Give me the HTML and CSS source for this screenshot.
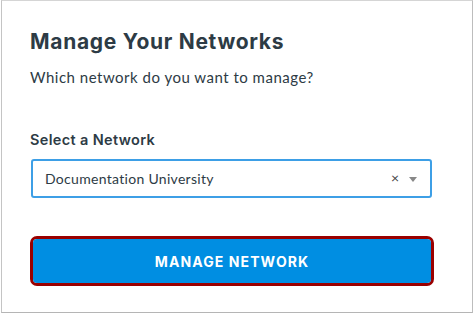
FILE: index.html
```html
<!DOCTYPE html>
<html>
<head>
<meta charset="utf-8">
<link rel="stylesheet" href="styles.css">
</head>
<body>
<div class="frame">
  <div class="panel">
    <h1 class="title">Manage Your Networks</h1>
    <p class="subtitle">Which network do you want to manage?</p>
    <label class="label">Select a Network</label>
    <div class="select">
      <span class="select-value">Documentation University</span>
      <span class="select-clear">×</span>
      <span class="select-arrow"></span>
    </div>
    <div class="btn-ring">
      <button class="btn">MANAGE NETWORK</button>
    </div>
  </div>
</div>
</body>
</html>
```
FILE: styles.css
```css
html, body {
  margin: 0;
  padding: 0;
  background: #ffffff;
}
body {
  font-family: Lato, "Open Sans", sans-serif;
  color: #2d3b45;
}
.frame {
  box-sizing: border-box;
  width: 472px;
  height: 313px;
  margin-left: 1px;
  border: 1px solid #d5d5d5;
  border-left-color: #c4c4c4;
  border-right-color: #bdbdbd;
  border-bottom-color: #b5b5b5;
  box-shadow: 1px 1px 1px rgba(0,0,0,0.15);
  background: #fff;
}
.panel {
  display: flex;
  flex-direction: column;
  padding: 29px 0 0 28px;
}
.title {
  margin: 0;
  font-family: Inter, Lato, sans-serif;
  font-size: 21px;
  font-weight: 700;
  line-height: 24px;
  letter-spacing: 0.7px;
}
.subtitle {
  margin: 13px 0 0 0;
  font-size: 15px;
  line-height: 20px;
  letter-spacing: 0.5px;
}
.label {
  margin-top: 44px;
  font-family: Inter, Lato, sans-serif;
  font-size: 14.5px;
  font-weight: 600;
  line-height: 18px;
  letter-spacing: 0.35px;
}
.select {
  box-sizing: border-box;
  margin-top: 10px;
  margin-left: 1px;
  width: 401px;
  height: 39px;
  border: 2px solid #3d9fe6;
  border-radius: 3px;
  display: flex;
  align-items: center;
  padding: 0 13px 0 12px;
  font-size: 14px;
}
.select-value {
  flex: 1;
  letter-spacing: 0.3px;
}
.select-clear {
  font-size: 14px;
  color: #444;
  margin-right: 10px;
  margin-top: -2px;
}
.select-arrow {
  width: 0;
  height: 0;
  border-left: 4.5px solid transparent;
  border-right: 4.5px solid transparent;
  border-top: 5px solid #888;
  margin-top: 2px;
}
.btn-ring {
  box-sizing: border-box;
  margin-top: 38px;
  width: 404px;
  height: 50px;
  border: 3px solid #9a0000;
  border-radius: 7px;
  display: flex;
}
.btn {
  flex: 1;
  border: none;
  border-radius: 4px;
  background: #008ee2;
  color: #fff;
  font-family: Inter, Lato, sans-serif;
  font-size: 14px;
  font-weight: 700;
  letter-spacing: 1.1px;
  padding: 0;
  margin: 0;
}
```
